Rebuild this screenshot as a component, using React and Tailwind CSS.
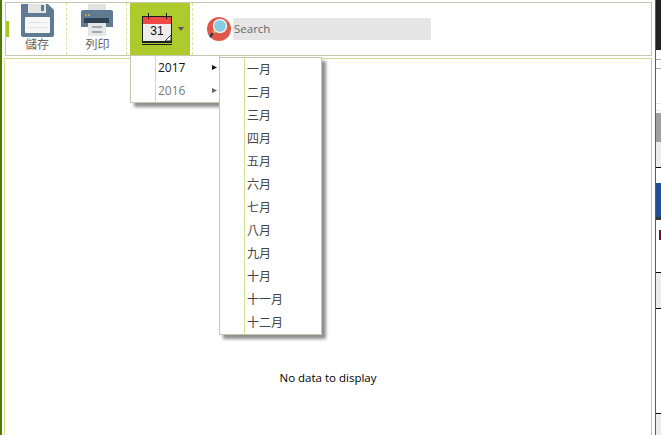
import React from "react";

const uiFont = { fontFamily: '"Open Sans", "Noto Sans CJK TC", sans-serif' };
const months = ["一月", "二月", "三月", "四月", "五月", "六月", "七月", "八月", "九月", "十月", "十一月", "十二月"];

const SaveIcon = () => (
  <svg width="33" height="33" viewBox="0 0 33 33">
    <path d="M1 0H27L33 6V31Q33 33 31 33H2Q0 33 0 31V1Q0 0 1 0Z" fill="#5f7a91" />
    <rect x="7" y="0" width="18" height="9" fill="#e4e4e4" />
    <rect x="20" y="1" width="3" height="6" fill="#5f7a91" />
    <rect x="4" y="13" width="25" height="16" rx="1" fill="#f7f7f7" />
    <rect x="7" y="18" width="19" height="1" fill="#dfe4ea" />
    <rect x="7" y="23" width="19" height="1" fill="#dfe4ea" />
  </svg>
);

const PrintIcon = () => (
  <svg width="33" height="33" viewBox="0 0 33 33">
    <rect x="7" y="0" width="18" height="7" fill="#e2e2e2" />
    <path d="M2 6H30Q32 6 32 8V23H0V8Q0 6 2 6Z" fill="#5f7a91" />
    <rect x="4" y="10" width="2" height="2" fill="#c98a6a" />
    <rect x="7" y="10" width="2" height="2" fill="#b3b06a" />
    <rect x="3" y="14" width="25" height="5" fill="#2f4254" />
    <rect x="7" y="19" width="18" height="13" fill="#e6e6e6" />
    <rect x="11" y="22" width="10" height="2" fill="#a3acb4" />
    <rect x="11" y="27" width="10" height="2" fill="#a3acb4" />
  </svg>
);

const CalendarIcon = () => (
  <svg width="30" height="32" viewBox="0 0 30 32">
    <rect x="0.5" y="3.5" width="29" height="25" fill="#ececec" stroke="#1c1c1c" />
    <rect x="1" y="4" width="28" height="7" fill="#ef4a45" />
    <rect x="6" y="0" width="1" height="6" fill="#1c1c1c" />
    <rect x="24" y="0" width="1" height="6" fill="#1c1c1c" />
    <path d="M23 28L29 22V28Z" fill="#fff" stroke="#333" />
    <rect x="0" y="29" width="30" height="1" fill="#1c1c1c" />
    <rect x="0" y="31" width="30" height="1" fill="#1c1c1c" />
    <text x="15" y="22" textAnchor="middle" fontSize="12" fontFamily="Liberation Sans, sans-serif" fill="#111">31</text>
  </svg>
);

const SearchIcon = () => (
  <svg width="24" height="24" viewBox="0 0 24 24">
    <circle cx="12" cy="12" r="12" fill="#e2574c" />
    <path d="M8 14L6 16" stroke="#e3b04b" strokeWidth="2.5" />
    <path d="M6 16L3 20" stroke="#33404a" strokeWidth="2.5" />
    <circle cx="13" cy="9" r="6.5" fill="#85cde3" stroke="#eeeeee" strokeWidth="1.5" />
  </svg>
);

const Arrow = ({ className }) => (
  <svg width="5" height="5" viewBox="0 0 5 5" className={className}>
    <path d="M0 0L5 2.5L0 5Z" fill="currentColor" />
  </svg>
);

const ToolButton = ({ label, icon, width }) => (
  <div className={`${width} h-[52px] flex flex-col items-center pl-[2px] pt-[1px] border-r border-dashed border-[#dbe5a0]`}>
    {icon}
    <span className="text-[12px] leading-[16px] text-[#666]">{label}</span>
  </div>
);

export default function App() {
  return (
    <div className="relative flex w-[661px] h-[435px] overflow-hidden bg-white" style={uiFont}>
      <div className="w-[2px] bg-[#4f7a00]" />

      {/* main area */}
      <div className="w-[650px] pl-[2px] pt-[2px] flex flex-col">
        {/* toolbar */}
        <div className="relative ml-[1px] h-[54px] flex items-stretch border border-[#c4c8b0]">
          <div className="absolute left-0 top-[18px] w-[3px] h-[16px] bg-[#a5c81f]" />
          <ToolButton label="儲存" width="w-[61px]" icon={<SaveIcon />} />
          <ToolButton label="列印" width="w-[60px]" icon={<PrintIcon />} />
          <div className="ml-[3px] w-[60px] h-[52px] bg-[#aecb2d] flex items-center pl-[12px] gap-[6px]">
            <CalendarIcon />
            <svg width="6" height="4" viewBox="0 0 6 4">
              <path d="M0 0H6L3 4Z" fill="#555" />
            </svg>
          </div>
          <div className="ml-[2px] h-[52px] border-l border-dashed border-[#dbe5a0] flex items-center pl-[14px]">
            <SearchIcon />
            <div className="ml-[2px] w-[198px] h-[22px] bg-[#e6e6e6] flex items-center pl-[1px] text-[11.5px] text-[#666]">
              Search
            </div>
          </div>
        </div>

        {/* grid panel */}
        <div className="mt-[2px] flex-1 border border-b-0 border-[#c4c8b0] border-t-[#d3df8a] border-l-[#d3df8a] flex items-start justify-center">
          <span className="mt-[311px] text-[11.5px] leading-[16px] text-black">No data to display</span>
        </div>
      </div>

      {/* year menu */}
      <div className="absolute left-[130px] top-[55px] w-[90px] h-[48px] flex bg-white border border-[#c4c8b0] shadow-[4px_4px_3px_#8f8f8f] text-[12px]">
        <div className="w-[25px] border-r border-[#d3df8a]" />
        <div className="flex-1">
          <div className="h-[23px] flex items-center justify-between pl-[2px] pr-[2px] text-[#111]">
            2017 <Arrow className="text-[#111]" />
          </div>
          <div className="h-[23px] flex items-center justify-between pl-[2px] pr-[2px] text-[#777]">
            2016 <Arrow className="text-[#666]" />
          </div>
        </div>
      </div>

      {/* month menu */}
      <div className="absolute left-[219px] top-[57px] w-[103px] h-[278px] flex bg-white border border-[#c4c8b0] shadow-[4px_4px_3px_#8f8f8f] text-[12px] text-[#444]">
        <div className="w-[25px] border-r border-[#d3df8a]" />
        <div className="flex-1 pl-[2px]">
          {months.map((m) => (
            <div key={m} className="h-[23.09px] flex items-center">
              {m}
            </div>
          ))}
        </div>
      </div>

      {/* neighbouring window edge */}
      <div className="ml-[3px] w-[1px] bg-[#4f7a00]" />
      <div className="flex-1 flex flex-col bg-white">
        <div className="h-[50px] bg-[#222222]" />
        <div className="h-[9px]" />
        <div className="h-[1px] bg-[#aaaaaa]" />
        <div className="h-[8px]" />
        <div className="h-[1px] bg-[#aaaaaa]" />
        <div className="h-[34px]" />
        <div className="h-[1px] bg-[#e6e6e6]" />
        <div className="h-[6px]" />
        <div className="h-[1px] bg-[#e6e6e6]" />
        <div className="h-[2px]" />
        <div className="h-[29px] bg-[#a0a0a0]" />
        <div className="h-[25px] bg-[#ececec]" />
        <div className="h-[1px] bg-black" />
        <div className="h-[15px]" />
        <div className="h-[34px] bg-[#1f4f95]" />
        <div className="h-[3px] bg-[#33373d]" />
        <div className="h-[10px]" />
        <div className="h-[10px] w-[2px] ml-[3px] bg-[#7a0a2a]" />
        <div className="h-[32px]" />
        <div className="h-[1px] bg-black" />
        <div className="h-[35px] bg-[#ececec]" />
        <div className="h-[1px] bg-black" />
        <div className="h-[104px]" />
        <div className="h-[1px] bg-black" />
        <div className="flex-1 bg-[#ececec]" />
      </div>
    </div>
  );
}
